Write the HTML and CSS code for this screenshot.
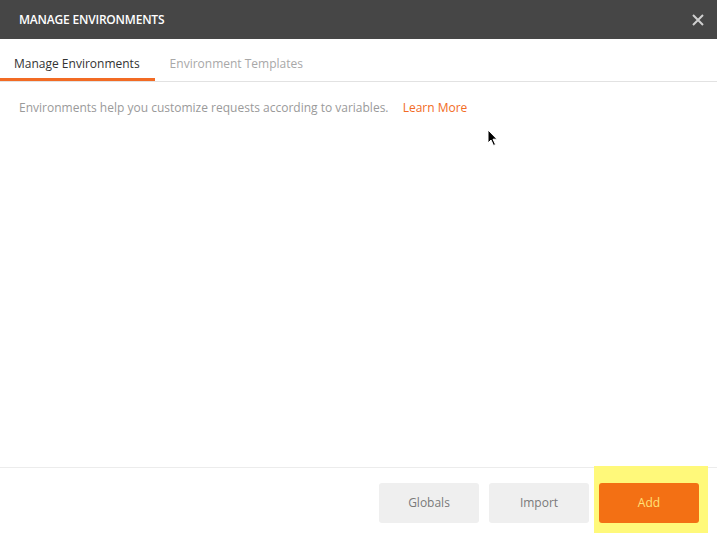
FILE: index.html
```html
<!DOCTYPE html>
<html>
<head>
<meta charset="utf-8">
<link rel="stylesheet" href="styles.css">
</head>
<body>
<div class="modal">
  <header class="modal-header">
    <span class="modal-title">MANAGE ENVIRONMENTS</span>
    <button class="close" aria-label="Close">
      <svg width="12" height="12" viewBox="0 0 12 12"><path d="M1 1 L11 11 M11 1 L1 11" stroke="#cfcfcf" stroke-width="2" fill="none"/></svg>
    </button>
  </header>
  <nav class="tabs">
    <div class="tab active">Manage Environments</div>
    <div class="tab">Environment Templates</div>
  </nav>
  <main class="content">
    <p class="desc">Environments help you customize requests according to variables. <a class="learn">Learn More</a></p>
  </main>
  <footer class="footer">
    <button class="btn">Globals</button>
    <button class="btn">Import</button>
    <div class="highlight"><button class="btn primary">Add</button></div>
  </footer>
  <svg class="cursor" width="12" height="18" viewBox="0 0 12 18"><path d="M1 1 L1 14 L4 11 L6.5 16.5 L8.5 15.5 L6 10.2 L10 10.2 Z" fill="#000" stroke="#fff" stroke-width="1"/></svg>
</div>
</body>
</html>
```
FILE: styles.css
```css
* { box-sizing: border-box; }
html, body { margin: 0; padding: 0; background: #fff; }
body { font-family: "Open Sans", "Liberation Sans", sans-serif; width: 717px; height: 541px; overflow: hidden; }
.modal { position: relative; display: flex; flex-direction: column; height: 541px; }
.modal-header {
  height: 39px; background: #464646; display: flex; align-items: center;
  justify-content: space-between; padding: 0 13px 0 19px;
}
.modal-title { color: #fff; font-size: 12px; font-weight: 600; letter-spacing: -0.2px; }
.close { background: none; border: 0; padding: 0; width: 12px; height: 12px; display: flex; cursor: pointer; }
.tabs { height: 43px; display: flex; border-bottom: 1px solid #e2e2e2; }
.tab { padding: 7px 15px 0 15px; font-size: 12px; color: #a8a8a8; display: flex; align-items: center; }
.tab.active { color: #333; border-bottom: 3px solid #f26b24; padding: 10px 15px 0 14px; }
.content { flex: 1; padding: 17px 19px; }
.desc { margin: 0; font-size: 12px; color: #9a9a9a; }
.learn { color: #f26b24; margin-left: 11px; }
.footer { height: 74px; border-top: 1px solid #ececec; display: flex; justify-content: flex-end; align-items: flex-start; gap: 10px; padding: 15px 18px 0 0; }
.btn { width: 100px; height: 40px; border: 0; border-radius: 3px; background: #efefef; color: #7a7a7a; font-family: inherit; font-size: 12px; padding: 0 0 2px; }
.highlight { background: #fff97a; margin: -17px -9px 0 -5px; padding: 17px 9px 10px 5px; }
.btn.primary { background: #f37014; color: #ffe27a; display: block; }
.cursor { position: absolute; left: 487px; top: 129px; }
```
